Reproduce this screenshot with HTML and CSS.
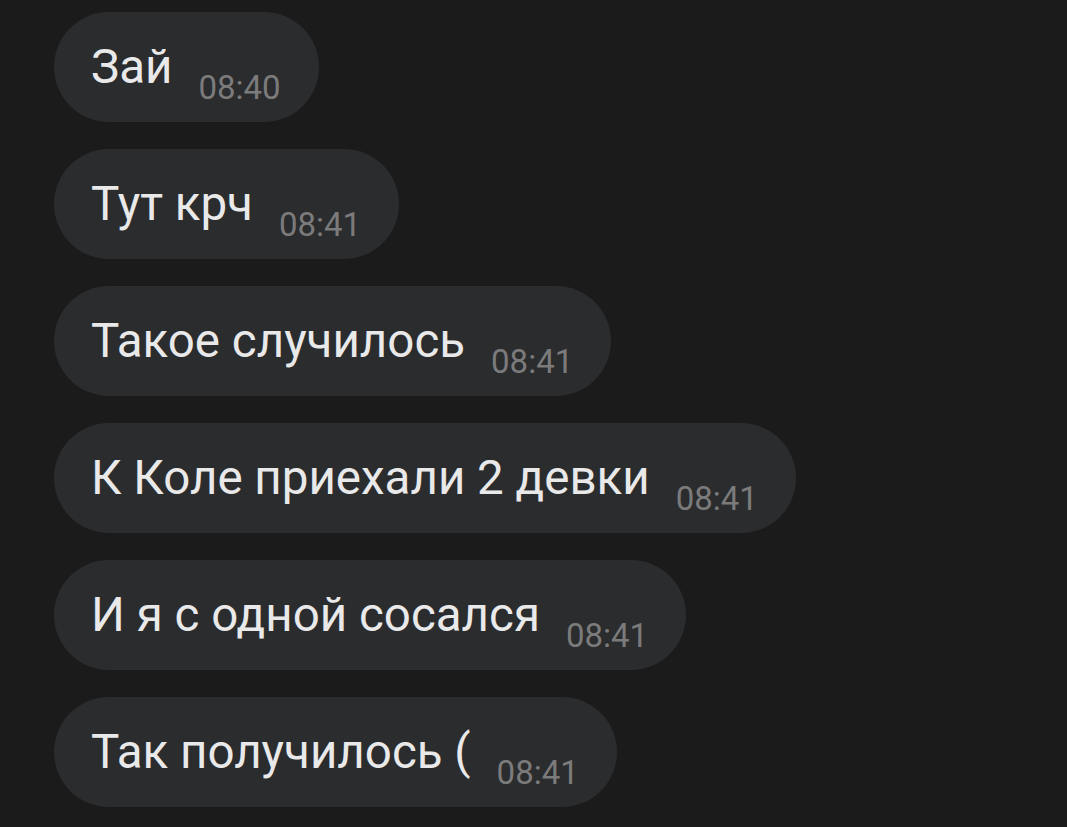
FILE: index.html
```html
<!DOCTYPE html>
<html lang="ru">
<head>
  <meta charset="UTF-8" />
  <meta name="viewport" content="width=device-width, initial-scale=1.0" />
  <title>Чат</title>
  <link rel="stylesheet" href="styles.css">
</head>
<body>
  <div class="chat">
    <div class="msg"><span class="text">Зай</span><span class="time">08:40</span></div>
    <div class="msg"><span class="text">Тут крч</span><span class="time">08:41</span></div>
    <div class="msg"><span class="text">Такое случилось</span><span class="time">08:41</span></div>
    <div class="msg"><span class="text">К Коле приехали 2 девки</span><span class="time">08:41</span></div>
    <div class="msg"><span class="text">И я с одной сосался</span><span class="time">08:41</span></div>
    <div class="msg"><span class="text">Так получилось (</span><span class="time">08:41</span></div>
  </div>
</body>
</html>
```

FILE: styles.css
```css
body {
  margin: 0;
  padding: 0;
  background: #1b1b1c;
  font-family: Roboto, "Noto Sans", sans-serif;
  height: 827px;
  overflow: hidden;
}
.chat {
  display: flex;
  flex-direction: column;
  align-items: flex-start;
  gap: 27px;
  padding: 12px 0 0 54px;
}
.msg {
  display: flex;
  align-items: flex-end;
  gap: 26px;
  background: #2b2c2e;
  border-radius: 55px;
  padding: 27px 38px 14px 37px;
}
.text {
  color: #e9e9ea;
  font-size: 47.5px;
  line-height: 56px;
  margin-bottom: 13px;
  white-space: nowrap;
}
.time {
  color: #7b7b7c;
  font-size: 33px;
  line-height: 40px;
}
```
